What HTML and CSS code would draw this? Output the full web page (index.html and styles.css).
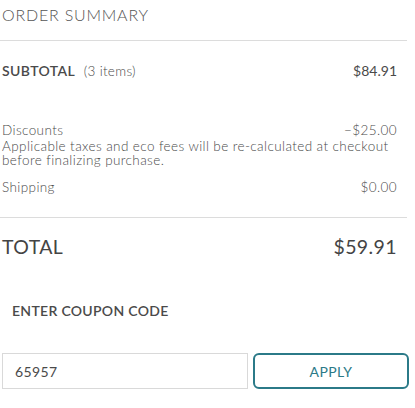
FILE: index.html
```html
<!DOCTYPE html>
<html lang="en">
<head>
  <meta charset="UTF-8" />
  <title>Order Summary</title>
  <link rel="stylesheet" href="styles.css">
</head>
<body>
<div class="summary">
  <h2 class="summary-title">ORDER SUMMARY</h2>

  <div class="row subtotal">
    <span><strong>SUBTOTAL</strong> <span class="count">(3 items)</span></span>
    <span>$84.91</span>
  </div>

  <div class="details">
    <div class="row">
      <span>Discounts</span>
      <span>&minus;$25.00</span>
    </div>
    <p class="note">Applicable taxes and eco fees will be re-calculated at checkout before finalizing purchase.</p>
    <div class="row shipping">
      <span>Shipping</span>
      <span>$0.00</span>
    </div>
  </div>

  <div class="row total">
    <span>TOTAL</span>
    <span>$59.91</span>
  </div>

  <div class="coupon">
    <label for="coupon_code">ENTER COUPON CODE</label>
    <div class="coupon-row">
      <input type="text" id="coupon_code" value="65957" />
      <button type="button">APPLY</button>
    </div>
  </div>
</div>
</body>
</html>
```

FILE: styles.css
```css
body {
  font-family: Lato, 'Liberation Sans', sans-serif;
  background: #fff;
  color: #4a4a4a;
  margin: 0;
}
.summary {
  width: 407px;
}
.summary-title {
  margin: 0;
  padding: 5px 0 0 2px;
  height: 35px;
  border-bottom: 1px solid #dcdcdc;
  font-size: 16px;
  font-weight: 300;
  letter-spacing: 0.8px;
  color: #555;
}
.row {
  display: flex;
  justify-content: space-between;
  padding: 0 10px 0 2px;
}
.subtotal {
  margin-top: 20px;
  font-size: 14px;
  line-height: 20px;
}
.subtotal strong {
  font-weight: 600;
  letter-spacing: 0.4px;
}
.count {
  margin-left: 5px;
  font-size: 13.5px;
  font-weight: 300;
  letter-spacing: 0.3px;
}
.details {
  margin-top: 42px;
  padding-bottom: 23px;
  border-bottom: 1px solid #dcdcdc;
  font-size: 13.5px;
  font-weight: 300;
  line-height: 14px;
  letter-spacing: 0.4px;
}
.note {
  margin: 2px 0 0;
  padding: 0 10px 0 2px;
  line-height: 14px;
}
.shipping {
  margin-top: 13px;
}
.total {
  margin-top: 17px;
  font-size: 19.5px;
  line-height: 24px;
  font-weight: 400;
  letter-spacing: 0.4px;
  color: #444;
}
.coupon {
  margin-top: 43px;
}
.coupon label {
  display: block;
  padding-left: 12px;
  font-size: 14px;
  font-weight: 600;
  letter-spacing: 0.3px;
}
.coupon-row {
  display: flex;
  gap: 5px;
  margin-top: 34px;
  padding-left: 2px;
}
.coupon-row input,
.coupon-row button {
  flex-shrink: 0;
  height: 36px;
  box-sizing: border-box;
  font-family: inherit;
  font-size: 14px;
  letter-spacing: 0.4px;
}
.coupon-row input {
  width: 246px;
  padding: 0 12px;
  border: 1px solid #d9d9d9;
  color: #4a4a4a;
}
.coupon-row button {
  width: 156px;
  border: 2px solid #2b7a88;
  border-radius: 6px;
  background: #fff;
  color: #2b7a88;
  cursor: pointer;
}
```
